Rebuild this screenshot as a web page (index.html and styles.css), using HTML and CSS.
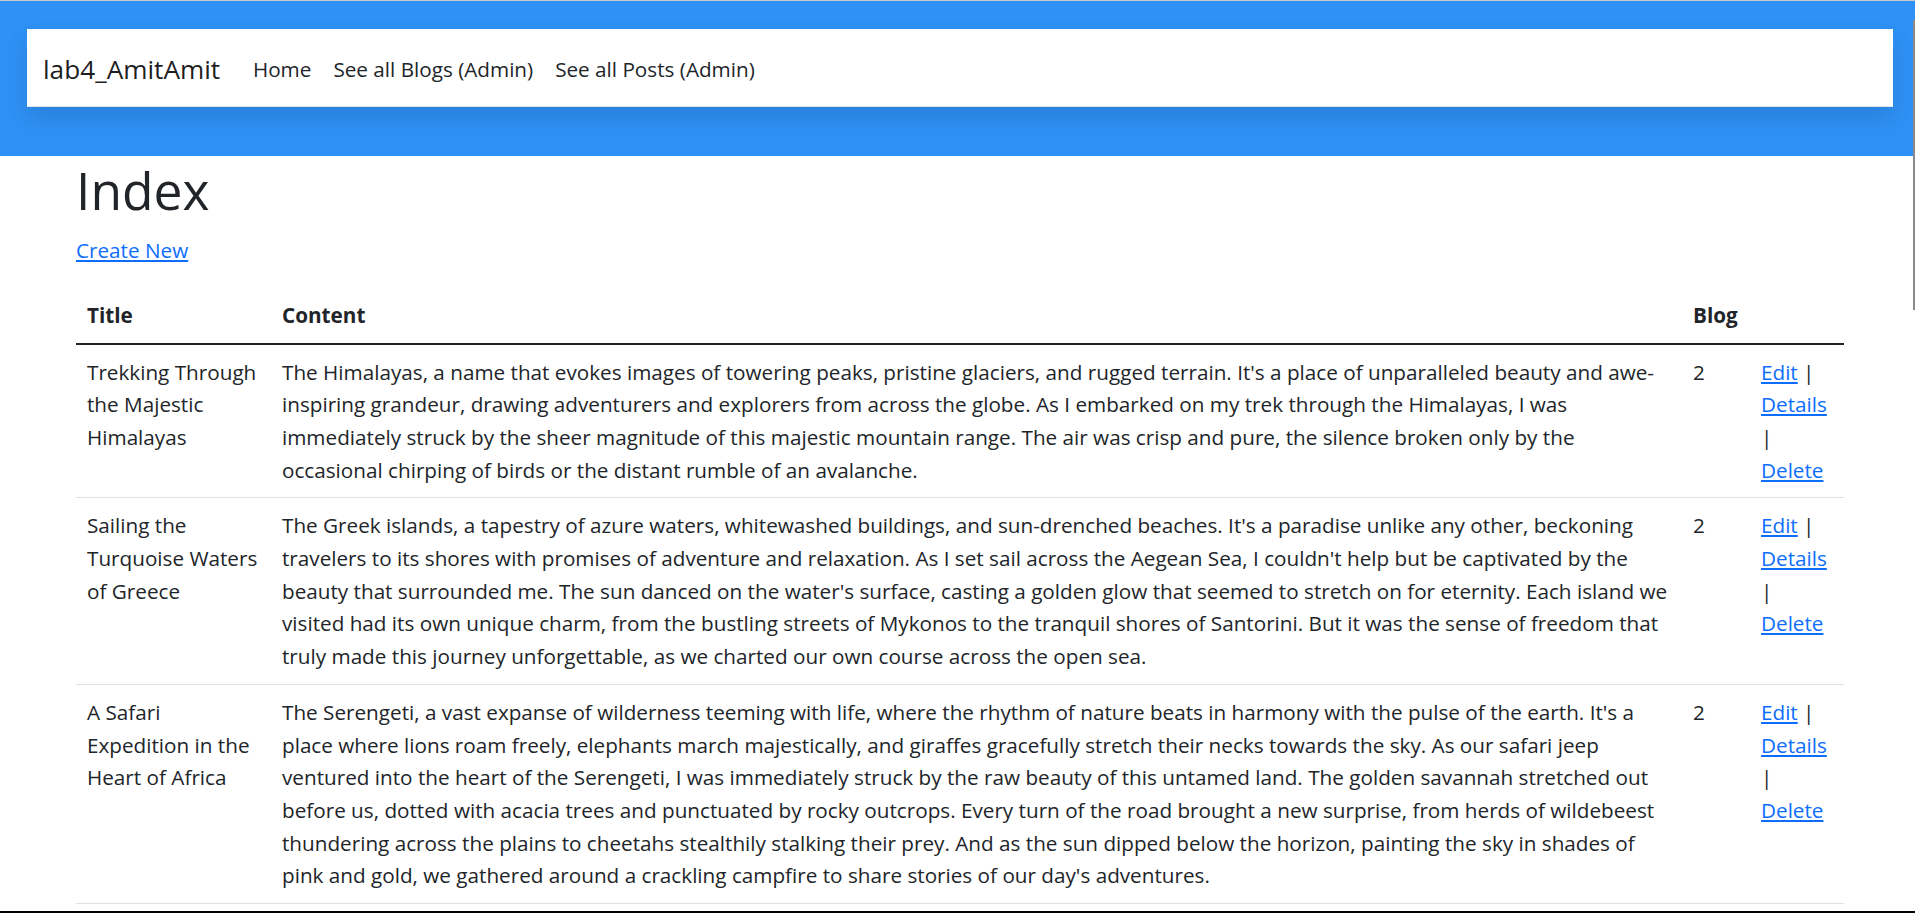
FILE: index.html
```html
<!DOCTYPE html>
<html lang="en">
<head>
<meta charset="utf-8">
<title>Index - lab4_AmitAmit</title>
<link rel="stylesheet" href="styles.css">
</head>
<body>
<header class="site-header">
  <nav class="navbar">
    <a class="brand" href="#">lab4_AmitAmit</a>
    <ul class="nav">
      <li><a class="nav-link" href="#">Home</a></li>
      <li><a class="nav-link" href="#">See all Blogs (Admin)</a></li>
      <li><a class="nav-link" href="#">See all Posts (Admin)</a></li>
    </ul>
  </nav>
</header>
<main class="container">
  <h1 class="page-title">Index</h1>
  <p class="create"><a href="#">Create New</a></p>
  <table class="table">
    <colgroup>
      <col class="col-title">
      <col class="col-content">
      <col class="col-blog">
      <col class="col-actions">
    </colgroup>
    <thead>
      <tr>
        <th>Title</th>
        <th>Content</th>
        <th>Blog</th>
        <th></th>
      </tr>
    </thead>
    <tbody>
      <tr>
        <td>Trekking Through the Majestic Himalayas</td>
        <td>The Himalayas, a name that evokes images of towering peaks, pristine glaciers, and rugged terrain. It's a place of unparalleled beauty and awe-inspiring grandeur, drawing adventurers and explorers from across the globe. As I embarked on my trek through the Himalayas, I was immediately struck by the sheer magnitude of this majestic mountain range. The air was crisp and pure, the silence broken only by the occasional chirping of birds or the distant rumble of an avalanche.</td>
        <td>2</td>
        <td><a href="#">Edit</a> | <a href="#">Details</a> | <a href="#">Delete</a></td>
      </tr>
      <tr>
        <td>Sailing the Turquoise Waters of Greece</td>
        <td>The Greek islands, a tapestry of azure waters, whitewashed buildings, and sun-drenched beaches. It's a paradise unlike any other, beckoning travelers to its shores with promises of adventure and relaxation. As I set sail across the Aegean Sea, I couldn't help but be captivated by the beauty that surrounded me. The sun danced on the water's surface, casting a golden glow that seemed to stretch on for eternity. Each island we visited had its own unique charm, from the bustling streets of Mykonos to the tranquil shores of Santorini. But it was the sense of freedom that truly made this journey unforgettable, as we charted our own course across the open sea.</td>
        <td>2</td>
        <td><a href="#">Edit</a> | <a href="#">Details</a> | <a href="#">Delete</a></td>
      </tr>
      <tr>
        <td>A Safari Expedition in the Heart of Africa</td>
        <td>The Serengeti, a vast expanse of wilderness teeming with life, where the rhythm of nature beats in harmony with the pulse of the earth. It's a place where lions roam freely, elephants march majestically, and giraffes gracefully stretch their necks towards the sky. As our safari jeep ventured into the heart of the Serengeti, I was immediately struck by the raw beauty of this untamed land. The golden savannah stretched out before us, dotted with acacia trees and punctuated by rocky outcrops. Every turn of the road brought a new surprise, from herds of wildebeest thundering across the plains to cheetahs stealthily stalking their prey. And as the sun dipped below the horizon, painting the sky in shades of pink and gold, we gathered around a crackling campfire to share stories of our day's adventures.</td>
        <td>2</td>
        <td><a href="#">Edit</a> | <a href="#">Details</a> | <a href="#">Delete</a></td>
      </tr>
    </tbody>
  </table>
</main>
<div class="scroll-thumb"></div>
<div class="bottom-edge"></div>
</body>
</html>
```

FILE: styles.css
```css
html {
  overflow: hidden;
}

body {
  margin: 0;
  border-top: 1px solid #c9c9c9;
  font-family: "Open Sans", "Noto Sans", sans-serif;
  font-size: 20.7px;
  line-height: 32.7px;
  color: #212529;
  background: #fff;
}

a {
  color: #0d6efd;
}

.site-header {
  background: #2f91f5;
  padding: 28px 22px 49px 27px;
}

.navbar {
  display: flex;
  align-items: center;
  background: #fff;
  border-bottom: 1px solid #dee2e6;
  box-shadow: 0 11px 22px rgba(0, 0, 0, 0.12);
  padding: 13px 16px 9px;
}

.brand {
  font-size: 26.2px;
  line-height: 41px;
  padding: 6.8px 0;
  margin-right: 21.8px;
  color: rgba(0, 0, 0, 0.9);
  text-decoration: none;
  white-space: nowrap;
}

.nav {
  display: flex;
  list-style: none;
  margin: 0;
  padding: 0;
}

.nav-link {
  display: block;
  padding: 11px 11px;
  color: #212529;
  text-decoration: none;
}

.container {
  width: 1768px;
  margin-left: 76px;
}

.page-title {
  font-size: 51.5px;
  font-weight: 400;
  line-height: 65.4px;
  margin: 2px 0 11px;
}

.create {
  margin: 0 0 21px;
}

.table {
  width: 100%;
  border-collapse: collapse;
  table-layout: fixed;
}

.col-title {
  width: 195px;
}

.col-blog {
  width: 68px;
}

.col-actions {
  width: 94px;
}

.table th,
.table td {
  padding: 11px;
  text-align: left;
  vertical-align: top;
  border-bottom: 1px solid #dee2e6;
}

.table th {
  font-weight: 700;
  vertical-align: bottom;
  border-bottom: 2px solid #212529;
}

.scroll-thumb {
  position: fixed;
  top: 20px;
  right: 0;
  width: 2px;
  height: 290px;
  background: #8a8a8a;
}

.bottom-edge {
  position: fixed;
  left: 0;
  right: 0;
  bottom: 0;
  height: 2px;
  background: #000;
}
```
